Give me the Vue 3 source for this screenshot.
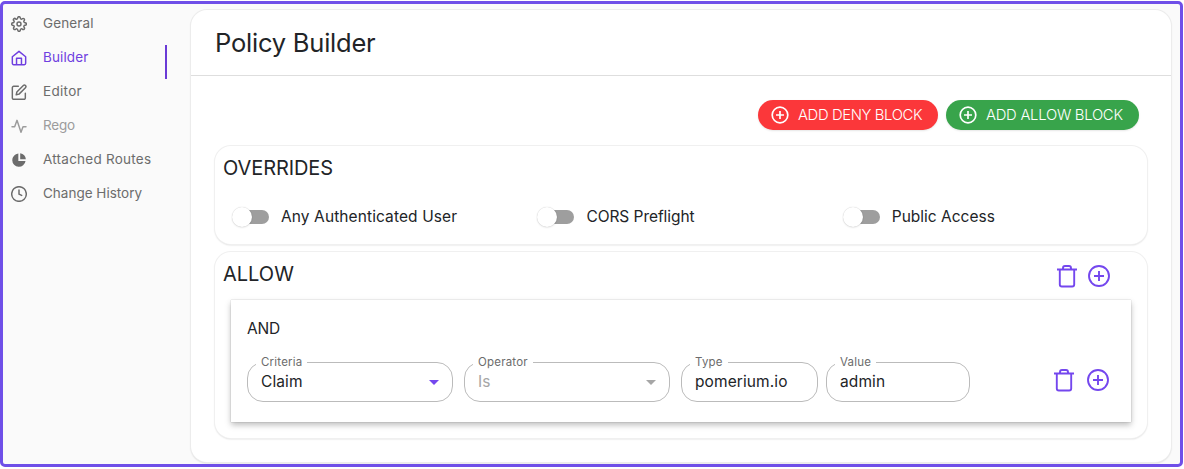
<script setup>
const nav = [
  { label: 'General', icon: 'gear', cls: 'n-general' },
  { label: 'Builder', icon: 'home', cls: 'n-builder active' },
  { label: 'Editor', icon: 'edit', cls: 'n-editor' },
  { label: 'Rego', icon: 'pulse', cls: 'n-rego disabled' },
  { label: 'Attached Routes', icon: 'pie', cls: 'n-routes' },
  { label: 'Change History', icon: 'clock', cls: 'n-history' },
]
const toggles = [
  { label: 'Any Authenticated User', cls: 't-any' },
  { label: 'CORS Preflight', cls: 't-cors' },
  { label: 'Public Access', cls: 't-public' },
]
const fields = [
  { label: 'Criteria', value: 'Claim', cls: 'f-criteria', select: true },
  { label: 'Operator', value: 'Is', cls: 'f-operator muted', select: true },
  { label: 'Type', value: 'pomerium.io', cls: 'f-type' },
  { label: 'Value', value: 'admin', cls: 'f-value' },
]
</script>

<template>
  <div class="frame">
    <nav class="side">
      <a v-for="n in nav" :key="n.label" class="item" :class="n.cls">
        <svg class="nav-icon" viewBox="0 0 24 24" fill="none" stroke="currentColor" stroke-width="2.2" stroke-linecap="round" stroke-linejoin="round">
          <template v-if="n.icon === 'gear'">
            <circle cx="12" cy="12" r="3" />
            <path d="M19.4 15a1.65 1.65 0 0 0 .33 1.82l.06.06a2 2 0 1 1-2.83 2.83l-.06-.06a1.65 1.65 0 0 0-2.8 1.17V21a2 2 0 0 1-4 0v-.09A1.65 1.65 0 0 0 9 19.4a1.65 1.65 0 0 0-1.82.33l-.06.06a2 2 0 1 1-2.83-2.83l.06-.06a1.65 1.65 0 0 0-1.17-2.8H3a2 2 0 0 1 0-4h.09A1.65 1.65 0 0 0 4.6 9a1.65 1.65 0 0 0-.33-1.82l-.06-.06a2 2 0 1 1 2.83-2.83l.06.06A1.65 1.65 0 0 0 9 4.6a1.65 1.65 0 0 0 1-1.51V3a2 2 0 0 1 4 0v.09a1.65 1.65 0 0 0 2.8 1.17l.06-.06a2 2 0 1 1 2.83 2.83l-.06.06A1.65 1.65 0 0 0 19.4 9a1.65 1.65 0 0 0 1.51 1H21a2 2 0 0 1 0 4h-.09a1.65 1.65 0 0 0-1.51 1z" />
          </template>
          <path v-else-if="n.icon === 'home'" d="M8.3 22V12.500h7.400V22M2 10.2 12 2l10 8.2V20a2 2 0 0 1-2 2H4a2 2 0 0 1-2-2z" />
          <path v-else-if="n.icon === 'edit'" d="M11 3.5H4a2 2 0 0 0-2 2V21a2 2 0 0 0 2 2h15.500a2 2 0 0 0 2-2v-7M18.500 2.300a2.100 2.100 0 0 1 3.200 3.200L12 15.200l-4.200 1 1-4.200z" />
          <path v-else-if="n.icon === 'pulse'" d="M1.500 13h4L9 3.500l6 18 3-8.500h4.500" />
          <g v-else-if="n.icon === 'pie'" fill="currentColor" stroke="none">
            <path d="M11 2.200a10 10 0 1 0 10.800 11.300H11z" />
            <path d="M13.800 1.800v9h8.500a10 10 0 0 0-8.500-9z" />
          </g>
          <path v-else d="M12 6v6.200l4 2M23 12a11 11 0 1 1-22 0 11 11 0 0 1 22 0z" />
        </svg>
        <span>{{ n.label }}</span>
      </a>
    </nav>

    <main class="card">
      <header class="head"><h1>Policy Builder</h1></header>
      <div class="body">
        <div class="actions">
          <button class="btn deny">
            <svg viewBox="0 0 20 20" fill="none" stroke="currentColor" stroke-width="1.700"><circle cx="10" cy="10" r="7.800" /><path d="M10 6v8M6 10h8" /></svg>
            <span>ADD DENY BLOCK</span>
          </button>
          <button class="btn allow">
            <svg viewBox="0 0 20 20" fill="none" stroke="currentColor" stroke-width="1.700"><circle cx="10" cy="10" r="7.800" /><path d="M10 6v8M6 10h8" /></svg>
            <span>ADD ALLOW BLOCK</span>
          </button>
        </div>

        <section class="panel overrides">
          <h2 class="h-over">OVERRIDES</h2>
          <div class="toggles">
            <label v-for="t in toggles" :key="t.label" class="toggle" :class="t.cls">
              <i class="switch"><b></b></i><span>{{ t.label }}</span>
            </label>
          </div>
        </section>

        <section class="panel allow-panel">
          <div class="allow-head">
            <h2 class="h-allow">ALLOW</h2>
            <div class="tools">
              <svg viewBox="0 0 24 24" class="tool"><path d="M2 5.500h20M4.800 5.500V20.500a2 2 0 0 0 2 2h10.400a2 2 0 0 0 2-2V5.500M8 5.500V4a2 2 0 0 1 2-2h4a2 2 0 0 1 2 2v1.500" /></svg>
              <svg viewBox="0 0 24 24" class="tool"><circle cx="12" cy="12" r="10" /><path d="M12 7v10M7 12h10" /></svg>
            </div>
          </div>
          <div class="group">
            <h3>AND</h3>
            <div class="row">
              <fieldset v-for="f in fields" :key="f.label" class="field" :class="f.cls">
                <legend>{{ f.label }}</legend>
                <div class="value">
                  <span>{{ f.value }}</span>
                  <svg v-if="f.select" viewBox="0 0 10 5"><path d="M0 0h10L5 5z" fill="currentColor" /></svg>
                </div>
              </fieldset>
              <div class="tools row-tools">
                <svg viewBox="0 0 24 24" class="tool"><path d="M2 5.500h20M4.800 5.500V20.500a2 2 0 0 0 2 2h10.400a2 2 0 0 0 2-2V5.500M8 5.500V4a2 2 0 0 1 2-2h4a2 2 0 0 1 2 2v1.500" /></svg>
                <svg viewBox="0 0 24 24" class="tool"><circle cx="12" cy="12" r="10" /><path d="M12 7v10M7 12h10" /></svg>
              </div>
            </div>
          </div>
        </section>
      </div>
    </main>
  </div>
</template>

<style>
body { background: #fff; }
</style>

<style scoped>
* { box-sizing: border-box; margin: 0; }
.frame {
  display: flex; width: 1183px; height: 466px; margin-top: 1px; overflow: hidden;
  border: 3px solid #6f4fe8; border-radius: 5px; background: #fafafa;
  font-family: Inter, "Liberation Sans", sans-serif; color: #222427; white-space: nowrap;
}
h1, h2, h3 { font-weight: 400; }
.side { width: 188px; padding-top: 7px; flex: none; }
.item {
  display: flex; align-items: flex-start; width: 164px; height: 34px; padding: 4px 0 0 8px;
  font-size: 13.500px; line-height: 17px; color: #6c6c6c;
}
.item span { margin-left: 16px; }
.n-general, .n-builder { letter-spacing: .12px; }
.n-editor { letter-spacing: .3px; }
.n-rego { letter-spacing: -.2px; }
.n-routes { letter-spacing: .24px; }
.nav-icon { width: 16px; height: 16px; margin-top: 1px; flex: none; }
.active { color: #6f3fe0; border-right: 2px solid #6a3ad6; }
.disabled { color: #9c9c9c; }
.card {
  width: 980px; height: 452px; margin-top: 6px; background: #fff; border-radius: 16px; flex: none;
  box-shadow: 0 0 0 1px #ececec, 0 1px 2px rgba(0, 0, 0, .2);
}
.head { height: 66px; border-bottom: 1px solid #dedede; padding: 17px 24px; }
h1 { font-size: 25.500px; line-height: 32px; letter-spacing: -.22px; }
.body { padding: 24px; }
.actions { display: flex; justify-content: flex-end; gap: 8px; padding-right: 8px; }
.btn {
  display: flex; align-items: center; height: 30px; padding: 0 0 0 12px; border: 0; border-radius: 15px;
  color: #fff; font: 300 14.800px/30px Inter, sans-serif; letter-spacing: -.36px; box-shadow: 0 1px 2px rgba(0, 0, 0, .1);
}
.btn svg { width: 20px; height: 20px; margin-right: 8px; }
.deny { width: 180px; background: #fb373a; }
.allow { width: 193px; background: #38a44b; letter-spacing: -.25px; }
.panel { width: 932px; border-radius: 16px; background: #fff; box-shadow: 0 0 0 1px #f0f0f0, 0 1px 2px rgba(0, 0, 0, .2); }
.overrides { height: 98px; margin-top: 16px; padding: 8px; }
h2 { font-size: 20px; line-height: 28px; }
.h-over { letter-spacing: -.1px; }
.toggles { display: grid; grid-template-columns: repeat(3, 305.400px); margin-top: 23px; padding-left: 9px; }
.toggle { display: flex; align-items: center; height: 24px; font-size: 15.500px; }
.toggle span { margin-top: -1px; }
.t-any { letter-spacing: .1px; }
.t-cors { letter-spacing: -.06px; }
.switch { display: flex; align-items: center; width: 37px; height: 14px; margin-right: 12px; border-radius: 7px; background: linear-gradient(to right, transparent 7px, #9e9e9e 7px); }
.switch b { width: 20px; height: 20px; border-radius: 50%; background: #fff; box-shadow: 0 0 1px rgba(0, 0, 0, .25), 0 1px 2px rgba(0, 0, 0, .08); }
.allow-panel { height: 186px; margin-top: 8px; padding: 8px 16px; }
.allow-head { display: flex; justify-content: space-between; height: 40px; }
.h-allow { margin-left: -8px; }
.tools { display: flex; gap: 8px; }
.allow-head .tools { margin: 4px 20px 0 0; }
.tool { width: 24px; height: 24px; fill: none; stroke: #7447ee; stroke-width: 1.900; }
.group { height: 122px; padding: 18px 16px; background: #fff; box-shadow: 0 0 1px rgba(0, 0, 0, .3), 0 3px 6px rgba(0, 0, 0, .26); }
h3 { font-size: 15.500px; line-height: 22px; letter-spacing: -.2px; }
.row { display: flex; margin-top: 17px; }
.field { height: 45px; padding: 0; border: 1px solid #bbb; border-radius: 16px; min-width: 0; flex: none; }
.field legend { margin-left: 8px; padding: 0 5px; font-size: 11.500px; line-height: 11px; height: 11px; color: #6c6c6c; letter-spacing: .2px; }
.value { display: flex; align-items: center; justify-content: space-between; padding: 0 13px; height: 28px; font-size: 15.500px; letter-spacing: .1px; }
.value span { margin-top: -1px; }
.value svg { width: 10px; height: 5px; color: #7447ee; }
.f-criteria, .f-operator { width: 206px; margin-right: 11px; }
.f-type { width: 137px; margin-right: 8px; }
.f-value { width: 144px; }
.muted .value, .muted .value svg { color: #a6a6a6; }
.row-tools { margin: 11px 0 0 82px; gap: 10px; }
</style>
